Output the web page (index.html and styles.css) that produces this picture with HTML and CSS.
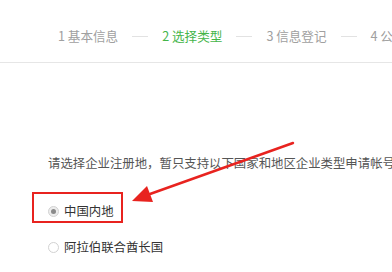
FILE: index.html
```html
<!DOCTYPE html>
<html lang="zh">
<head>
<meta charset="utf-8">
<link rel="stylesheet" href="styles.css">
</head>
<body>
<div class="page">
  <header class="header">
    <div class="steps">
      <span class="step">1 基本信息</span>
      <span class="sep"></span>
      <span class="step active">2 选择类型</span>
      <span class="sep"></span>
      <span class="step">3 信息登记</span>
      <span class="sep"></span>
      <span class="step">4 公众号信息</span>
    </div>
  </header>
  <main class="main">
    <p class="intro">请选择企业注册地，暂只支持以下国家和地区企业类型申请帐号</p>
    <div class="options">
      <label class="option checked"><span class="radio"></span><span class="label">中国内地</span></label>
      <label class="option"><span class="radio"></span><span class="label">阿拉伯联合酋长国</span></label>
    </div>
  </main>
  <div class="mark-box"></div>
  <svg class="arrow" width="392" height="272" viewBox="0 0 392 272">
    <line x1="293" y1="143" x2="150" y2="194" stroke="#e8231f" stroke-width="2.4" stroke-linecap="round"/>
    <polygon points="132,201 147,186 153,202" fill="#e8231f"/>
  </svg>
</div>
</body>
</html>
```
FILE: styles.css
```css
html, body {
  margin: 0;
  padding: 0;
  background: #fff;
}
body {
  font-family: "Noto Sans CJK SC", "Liberation Sans", sans-serif;
  width: 392px;
  height: 272px;
  overflow: hidden;
}
.page {
  position: relative;
  width: 392px;
  height: 272px;
  overflow: hidden;
}
.header {
  box-sizing: border-box;
  height: 63px;
  padding-top: 28px;
  border-bottom: 1px solid #e6e6e6;
}
.steps {
  display: flex;
  align-items: center;
  gap: 14px;
  padding-left: 58px;
  white-space: nowrap;
  height: 16px;
}
.step {
  font-size: 12.6px;
  line-height: 16px;
  color: #a0a0a0;
}
.step.active {
  color: #44b549;
}
.sep {
  flex: none;
  width: 16px;
  height: 1px;
  background: #e2e2e2;
}
.main {
  padding-left: 48px;
}
.intro {
  margin: 90px 0 0 0;
  font-size: 12.4px;
  line-height: 20px;
  color: #555;
  white-space: nowrap;
}
.options {
  display: flex;
  flex-direction: column;
  gap: 16px;
  margin-top: 28px;
}
.option {
  display: flex;
  align-items: center;
  gap: 5px;
  height: 20px;
  font-size: 12.4px;
  color: #333;
  white-space: nowrap;
}
.radio {
  box-sizing: border-box;
  width: 11px;
  height: 11px;
  border: 1px solid #d2d2d2;
  border-radius: 50%;
  background: #fff;
  display: flex;
  align-items: center;
  justify-content: center;
}
.option.checked .radio {
  background: #ededed;
}
.option.checked .radio::after {
  content: "";
  width: 5px;
  height: 5px;
  border-radius: 50%;
  background: #8a8a8a;
}
.mark-box {
  position: absolute;
  left: 32px;
  top: 192px;
  width: 91px;
  height: 31px;
  box-sizing: border-box;
  border: 2.5px solid #e8231f;
}
.arrow {
  position: absolute;
  left: 0;
  top: 0;
  pointer-events: none;
}
```
